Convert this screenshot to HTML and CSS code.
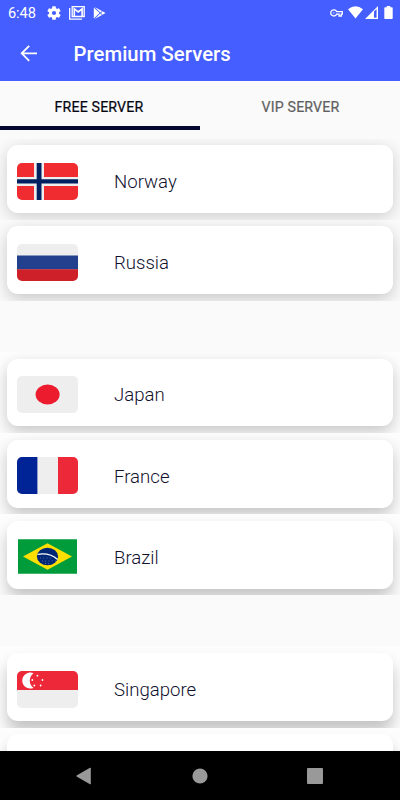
FILE: index.html
```html
<!DOCTYPE html>
<html lang="en">
<head>
<meta charset="utf-8">
<title>Premium Servers</title>
<link rel="stylesheet" href="styles.css">
</head>
<body>
<div class="screen">
  <header class="top">
    <div class="status">
      <span class="clock">6:48</span>
      <svg class="gear" width="14" height="14" viewBox="2 2 20 20"><path fill="#fff" d="M19.14 12.94c.04-.3.06-.61.06-.94s-.02-.64-.07-.94l2.03-1.58a.49.49 0 0 0 .12-.61l-1.92-3.32a.49.49 0 0 0-.59-.22l-2.39.96a7 7 0 0 0-1.62-.94l-.36-2.54a.48.48 0 0 0-.48-.41h-3.84a.48.48 0 0 0-.47.41l-.36 2.54c-.59.24-1.13.57-1.62.94l-2.39-.96a.48.48 0 0 0-.59.22L2.74 8.87a.48.48 0 0 0 .12.61l2.03 1.58a6 6 0 0 0 0 1.88l-2.03 1.58a.49.49 0 0 0-.12.61l1.92 3.32c.12.22.37.29.59.22l2.39-.96c.5.38 1.03.7 1.62.94l.36 2.54c.05.24.24.41.48.41h3.84c.24 0 .44-.17.47-.41l.36-2.54c.59-.24 1.13-.56 1.62-.94l2.39.96c.22.08.47 0 .59-.22l1.92-3.32a.48.48 0 0 0-.12-.61zM12 15a3 3 0 1 1 0-6 3 3 0 0 1 0 6z"/></svg>
      <svg class="mail" width="16" height="14" viewBox="0 0 16 14"><path fill="none" stroke="#fff" stroke-width="1.3" d="M.7 2v11.200H13M3.200.7h12v9.800h-12z"/><path fill="none" stroke="#fff" stroke-width="1.600" d="M5.300 10V2.800l3.900 3.100 3.900-3.100V10"/></svg>
      <svg class="play" width="13" height="12" viewBox="0 0 13 12"><path fill="#fff" d="M1.6 0 9 4 7.3 5.600zM.8.6 6.6 6l-5.800 5.400zM9.700 4.300 12.500 6 9.700 7.700 8 6zM7.300 6.500 9 8l-7.400 4z"/></svg>
      <span class="spacer"></span>
      <svg width="13" height="8" viewBox="0 0 13 8"><path fill="none" stroke="#fff" stroke-width="1.300" d="M6.700 2.700H12.300V5.100H11.300V7H9.100V5.100H6.700A3.100 3.100 0 1 1 6.700 2.700z"/><circle cx="3.900" cy="3.900" r=".6" fill="#fff"/></svg>
      <svg class="wifi" width="15" height="13" viewBox="0 0 15 13"><path fill="#fff" d="M7.500 12.600 0 3.200Q7.500-2.600 15 3.200z"/></svg>
      <svg class="signal" width="13" height="13" viewBox="0 0 13 13"><path fill="#fff" fill-rule="evenodd" d="M0 13 13 0V13zM9 5.500V11.800H11.600V3z"/></svg>
      <svg class="battery" width="9" height="13" viewBox="0 0 9 13"><path fill="#fff" d="M2.700 0h3.600v1.200H8q.7 0 .7.700v10.400q0 .7-.7.700H1q-.7 0-.7-.7V1.900q0-.7.700-.7h1.700z"/></svg>
    </div>
    <div class="appbar">
      <svg width="18" height="17" viewBox="0 0 18 17"><path fill="none" stroke="#fff" stroke-width="1.800" d="M17 8.300H1.600M9.200.9 1.700 8.300l7.500 7.500"/></svg>
      <h1>Premium Servers</h1>
    </div>
  </header>
  <nav class="tabs"><div class="tab active">FREE SERVER</div><div class="tab">VIP SERVER</div></nav>
  <main class="list">
    <div class="row s1"><div class="card">
      <svg class="flag" viewBox="0 0 61 37"><path fill="#f02c31" d="M0 0h61v37H0z"/><path fill="#eee" d="M17 0h10v37H17zM0 14h61v9H0z"/><path fill="#002060" d="M19.700 0h4.800v37h-4.800zM0 16.300h61v4.200H0z"/></svg><span>Norway</span></div></div>
    <div class="row s2"><div class="card">
      <svg class="flag" viewBox="0 0 61 37"><path fill="#eee" d="M0 0h61v12H0z"/><path fill="#23408e" d="M0 11.500h61v14H0z"/><path fill="#ce2028" d="M0 25.300h61V37H0z"/></svg><span>Russia</span></div></div>
    <div class="gap"></div>
    <div class="row s3"><div class="card">
      <svg class="flag" viewBox="0 0 61 37"><path fill="#eee" d="M0 0h61v37H0z"/><ellipse cx="30.600" cy="18.500" rx="12" ry="10" fill="#ed1b2e"/></svg><span>Japan</span></div></div>
    <div class="row s4"><div class="card">
      <svg class="flag" viewBox="0 0 61 37"><path fill="#eee" d="M0 0h61v37H0z"/><path fill="#002395" d="M0 0h20.400v37H0z"/><path fill="#ed2939" d="M41 0h20v37H41z"/></svg><span>France</span></div></div>
    <div class="row s5"><div class="card">
      <svg class="flag square" viewBox="0 0 61 37"><path fill="#009b3a" d="M1 1.200h59v34.600H1z"/><path fill="#fedf00" d="M6 18.500 30.500 5.300 55 18.500 30.500 31.800z"/><ellipse cx="30.500" cy="18.500" rx="10.600" ry="8.800" fill="#002776"/><path fill="none" stroke="#fff" stroke-width="1.300" d="M20.600 16.300Q33 14.500 40.600 21.500"/><path stroke="#c5cce0" stroke-width=".5" stroke-dasharray=".8 2.500" d="M23 20h12M25 23h14M28 25.500h6"/></svg><span>Brazil</span></div></div>
    <div class="gap"></div>
    <div class="row s6"><div class="card">
      <svg class="flag" viewBox="0 0 61 37"><path fill="#eee" d="M0 0h61v37H0z"/><path fill="#ed2939" d="M0 0h61v19H0z"/><path fill="#fff" d="M16.500 2.300A8 8 0 1 0 16.500 16.900 9 9 0 0 1 16.500 2.300z"/><g fill="#fff"><circle cx="20.400" cy="4.700" r=".9"/><circle cx="15.300" cy="9" r=".9"/><circle cx="25.500" cy="9" r=".9"/><circle cx="17.300" cy="14.500" r=".9"/><circle cx="23.600" cy="14.500" r=".9"/></g></svg><span>Singapore</span></div></div>
    <div class="row s7"><div class="card"></div></div>
  </main>
  <footer class="nav">
    <svg class="back" width="15" height="18" viewBox="0 0 15 18"><path fill="#999" d="M14.800 1.200v15.600q0 .8-.8.400L.6 9.600Q0 9 .6 8.400L14 .8q.8-.4.8.4z"/></svg>
    <svg class="home" width="16" height="16" viewBox="0 0 16 16"><circle cx="8" cy="8" r="7.600" fill="#999"/></svg>
    <svg class="recent" width="16" height="16" viewBox="0 0 16 16"><rect width="16" height="16" rx="1" fill="#999"/></svg>
  </footer>
</div>
</body>
</html>
```
FILE: styles.css
```css
* { box-sizing: border-box; }
body { margin: 0; font-family: Roboto, sans-serif; background: #fafafa; }
svg { display: block; flex: none; }
.screen { width: 400px; height: 800px; display: flex; flex-direction: column; overflow: hidden; background: #fafafa; }
.top { height: 81px; flex: none; background: #455eff; color: #fff; }
.status { height: 25px; display: flex; align-items: center; padding: 0 7px 0 8px; }
.clock { font-size: 14.600px; width: 39px; line-height: 25px; letter-spacing: -.1px; padding-top: 1px; }
.mail { margin-left: 8px; }
.play { margin-left: 8px; }
.spacer { flex: 1; }
.wifi { margin-left: 5px; }
.signal { margin-left: 2px; }
.battery { margin-left: 6.500px; }
.appbar { height: 56px; display: flex; align-items: center; padding-left: 20px; }
.appbar h1 { margin: 2px 0 0 35.500px; font-size: 20.300px; font-weight: 500; line-height: 28px; letter-spacing: .05px; }
.tabs { height: 49px; flex: none; display: grid; grid-template-columns: 1fr 1fr; }
.tab { text-align: center; font-size: 14.200px; font-weight: 400; line-height: 52px; color: #606060; -webkit-text-stroke: .2px; letter-spacing: .15px; padding-left: 1px; }
.tab.active { color: #050510; border-bottom: 4px solid #05082e; padding: 0 2px 0 0; height: 49px; }
.list { flex: 1; min-height: 0; overflow: hidden; padding-top: 8.500px; }
.row { height: 81.200px; padding: 6.700px 7px 0; overflow: hidden; }
.card { height: 67.800px; border-radius: 11px; background: #fff; display: flex; align-items: center; padding: 4px 0 0 10px; font-size: 18.600px; color: #11112e; font-weight: 350; box-shadow: 0 4px 16px rgba(0, 0, 0, .18); }
.card span { margin: 2px 0 0 36px; }
.flag { width: 61px; height: 37px; border-radius: 5px; }
.flag.square { border-radius: 0; }
.gap { height: 51px; }
.s2 .card { box-shadow: 0 5px 16px rgba(0, 0, 0, .20); }
.s3, .s4, .s5, .s6, .s7 { background: #fdfdfd; }
.s3 .card { box-shadow: 0 6px 16px rgba(0, 0, 0, .22); }
.s4 .card { box-shadow: 0 7px 16px rgba(0, 0, 0, .23); }
.s5 .card { box-shadow: 0 9px 16px rgba(0, 0, 0, .23); }
.s6 .card, .s7 .card { box-shadow: 0 11px 16px rgba(0, 0, 0, .23); }
.nav { height: 49px; flex: none; background: #000; display: flex; align-items: center; padding-left: 76px; }
.home { margin-left: 101px; }
.recent { margin-left: 99px; }
```
